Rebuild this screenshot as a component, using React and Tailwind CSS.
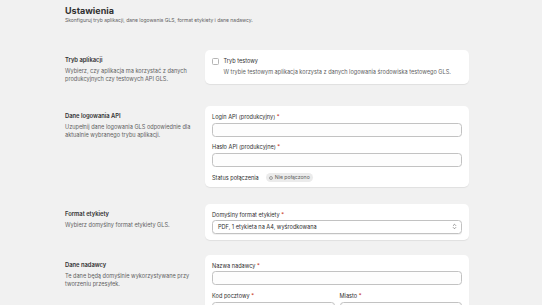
import React from "react";

const Req = () => <span className="text-[#c4290e]"> *</span>;

function Label({ children, required }) {
  return (
    <div className="text-[5.6px] leading-[8px] text-[#303030]">
      {children}
      {required && <Req />}
    </div>
  );
}

function Input() {
  return (
    <div className="h-[14px] w-full rounded-[3.5px] border border-[#c2c2c2] bg-[#fdfdfd]" />
  );
}

function Card({ children, className = "" }) {
  return (
    <div
      className={
        "w-[264px] rounded-[5px] bg-white px-[7px] shadow-[0_1px_1px_rgba(0,0,0,0.07)] " +
        className
      }
    >
      {children}
    </div>
  );
}

function Side({ title, lines }) {
  return (
    <div className="w-[134px] shrink-0 pt-[6px]">
      <div className="text-[5.8px] font-semibold leading-[8px] text-[#303030]">{title}</div>
      <div className="mt-[3px] text-[5.6px] leading-[8px] text-[#616161]">{lines}</div>
    </div>
  );
}

export default function App() {
  return (
    <div
      className="min-h-screen bg-[#f1f1f1] pl-[65px] pt-[5px] text-[#303030]"
      style={{ fontFamily: "Inter, 'Noto Sans', sans-serif" }}
    >
      <div className="text-[9px] font-bold leading-[12px] text-[#303030]">Ustawienia</div>
      <div className="text-[5px] leading-[7px] text-[#616161]">
        Skonfiguruj tryb aplikacji, dane logowania GLS, format etykiety i dane nadawcy.
      </div>

      {/* Section 1 */}
      <div className="mt-[26px] flex items-start gap-[6px]">
        <Side
          title="Tryb aplikacji"
          lines="Wybierz, czy aplikacja ma korzystać z danych produkcyjnych czy testowych API GLS."
        />
        <Card className="pb-[8px] pt-[8px]">
          <div className="flex items-center gap-[5px]">
            <div className="h-[6.5px] w-[6.5px] rounded-[1.5px] border border-[#b5b5b5] bg-white" />
            <div className="text-[5.6px] leading-[6px] text-[#303030]">Tryb testowy</div>
          </div>
          <div className="mt-[3px] pl-[11.5px] text-[5.6px] leading-[8px] text-[#616161]">
            W trybie testowym aplikacja korzysta z danych logowania środowiska testowego GLS.
          </div>
        </Card>
      </div>

      {/* Section 2 */}
      <div className="mt-[22px] flex items-start gap-[6px]">
        <Side
          title="Dane logowania API"
          lines="Uzupełnij dane logowania GLS odpowiednie dla aktualnie wybranego trybu aplikacji."
        />
        <Card className="pb-[4px] pt-[7px]">
          <Label required>Login API (produkcyjny)</Label>
          <div className="mt-[2px]">
            <Input />
          </div>
          <div className="mt-[6px]">
            <Label required>Hasło API (produkcyjne)</Label>
          </div>
          <div className="mt-[2px]">
            <Input />
          </div>
          <div className="mt-[6px] flex h-[10px] items-center gap-[7px]">
            <span className="text-[5.6px] leading-[8px] text-[#303030]">Status połączenia</span>
            <span className="flex h-[9px] items-center gap-[2px] rounded-full bg-[#ebebeb] px-[3px] text-[5.2px] text-[#616161]">
              <svg width="4" height="4" viewBox="0 0 10 10">
                <circle cx="5" cy="5" r="3.6" fill="none" stroke="#616161" strokeWidth="1.4" />
              </svg>
              Nie połączono
            </span>
          </div>
        </Card>
      </div>

      {/* Section 3 */}
      <div className="mt-[17px] flex items-start gap-[6px]">
        <Side title="Format etykiety" lines="Wybierz domyślny format etykiety GLS." />
        <Card className="pb-[6px] pt-[7px]">
          <Label required>Domyślny format etykiety</Label>
          <div className="mt-[1px] flex h-[14px] w-full items-center justify-between rounded-[3.5px] border border-[#c2c2c2] bg-white pl-[5px] pr-[4px] shadow-[0_1px_0_rgba(0,0,0,0.05)]">
            <span className="text-[5.6px] leading-[8px] text-[#303030]">
              PDF, 1 etykieta na A4, wyśrodkowana
            </span>
            <svg width="5" height="7" viewBox="0 0 10 14">
              <path d="M2.5 5 L5 2.5 L7.5 5" fill="none" stroke="#616161" strokeWidth="1.3" strokeLinecap="round" strokeLinejoin="round" />
              <path d="M2.5 9 L5 11.5 L7.5 9" fill="none" stroke="#616161" strokeWidth="1.3" strokeLinecap="round" strokeLinejoin="round" />
            </svg>
          </div>
        </Card>
      </div>

      {/* Section 4 */}
      <div className="mt-[15px] flex items-start gap-[6px]">
        <Side
          title="Dane nadawcy"
          lines="Te dane będą domyślnie wykorzystywane przy tworzeniu przesyłek."
        />
        <Card className="pb-[7px] pt-[7px]">
          <Label required>Nazwa nadawcy</Label>
          <div className="mt-[1px]">
            <Input />
          </div>
          <div className="mt-[7px] grid grid-cols-2 gap-x-[5px]">
            <div>
              <Label required>Kod pocztowy</Label>
              <div className="mt-[2px]">
                <Input />
              </div>
            </div>
            <div>
              <Label required>Miasto</Label>
              <div className="mt-[2px]">
                <Input />
              </div>
            </div>
          </div>
        </Card>
      </div>
    </div>
  );
}
